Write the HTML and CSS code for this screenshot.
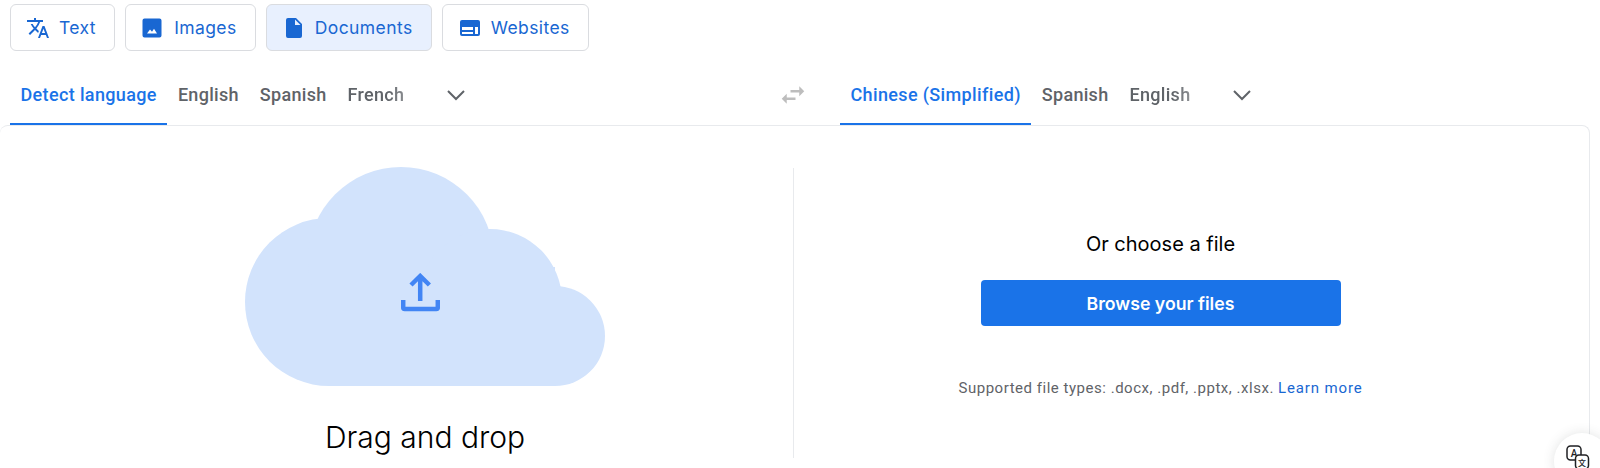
FILE: index.html
```html
<!DOCTYPE html>
<html lang="en">

<head>
  <meta charset="UTF-8">
  <meta name="viewport" content="width=device-width, initial-scale=1.0">
  <title>Translate</title>
  <link rel="stylesheet" href="styles.css">
</head>

<body>
  <nav class="modes">
    <a class="mode">
      <svg class="mode-icon" viewBox="0 0 24 24"><path d="M12.870 15.070l-2.540-2.510.030-.030A17.520 17.520 0 0 0 14.070 6H17V4h-7V2H8v2H1v1.990h11.170C11.500 7.920 10.440 9.750 9 11.350 8.070 10.320 7.300 9.190 6.690 8h-2c.730 1.630 1.730 3.170 2.980 4.560l-5.090 5.020L4 19l5-5 3.110 3.110.760-2.040zM18.500 10h-2L12 22h2l1.120-3h4.750L21 22h2l-4.500-12zm-2.620 7l1.620-4.330L19.120 17h-3.240z"/></svg>
      Text
    </a>
    <a class="mode">
      <svg class="mode-icon" viewBox="0 0 24 24"><path fill-rule="evenodd" d="M3.500 2.500h15a2 2 0 0 1 2 2v15a2 2 0 0 1-2 2h-15a2 2 0 0 1-2-2v-15a2 2 0 0 1 2-2zM6 17.500l3-4 2 2.200 2-3 3 4.800H6z"/></svg>
      Images
    </a>
    <a class="mode active">
      <svg class="mode-icon" viewBox="0 0 24 24"><path d="M6 2a2 2 0 0 0-2 2v16a2 2 0 0 0 2 2h12a2 2 0 0 0 2-2V8l-6-6H6zm7 7V3.500L18.500 9H13z"/></svg>
      Documents
    </a>
    <a class="mode">
      <svg class="mode-icon" viewBox="0 0 24 24"><path d="M20 4H4a2 2 0 0 0-2 2v12a2 2 0 0 0 2 2h16a2 2 0 0 0 2-2V6a2 2 0 0 0-2-2zM4 11h11v3H4v-3zm0 7v-2h11v2H4zm16 0h-3v-7h3v7z"/></svg>
      Websites
    </a>
  </nav>

  <div class="lang-bar">
    <div class="lang-side source">
      <a class="lang selected">Detect language</a>
      <a class="lang">English</a>
      <a class="lang">Spanish</a>
      <a class="lang fade">French</a>
      <svg class="chevron" viewBox="0 0 24 24"><path d="M4 8l8 8 8-8"/></svg>
    </div>
    <svg class="swap" viewBox="0 0 24 24"><path d="M6.990 11L3 15l3.990 4v-3H14v-2H6.990v-3zM21 9l-3.990-4v3H10v2h7.010v3L21 9z"/></svg>
    <div class="lang-side">
      <a class="lang selected">Chinese (Simplified)</a>
      <a class="lang">Spanish</a>
      <a class="lang fade">English</a>
      <svg class="chevron" viewBox="0 0 24 24"><path d="M4 8l8 8 8-8"/></svg>
    </div>
  </div>

  <main class="panel">
    <section class="drop">
      <svg class="cloud" viewBox="0 0 360 219">
        <circle cx="84" cy="135" r="84"/>
        <circle cx="156" cy="93" r="93"/>
        <circle cx="245" cy="134" r="72"/>
        <circle cx="310" cy="169" r="50"/>
        <rect x="84" y="100" width="226" height="119"/>
      </svg>
      <svg class="upload" viewBox="0 0 39 39"><path d="M10 12l9.200-9 9.200 9M19.200 3v25M2.200 27v7.500a1.500 1.500 0 0 0 1.500 1.500h31.600a1.500 1.500 0 0 0 1.500-1.500V27"/></svg>
      <h2 class="drop-title">Drag and drop</h2>
    </section>
    <section class="choose">
      <h2 class="choose-title">Or choose a file</h2>
      <button class="browse">Browse your files</button>
      <p class="types">Supported file types: .docx, .pdf, .pptx, .xlsx. <a class="learn">Learn more</a></p>
    </section>
  </main>

  <div class="float-btn">
    <svg viewBox="0 0 24 24">
      <rect x="1" y="1" width="14" height="14" rx="3.500"/>
      <text x="8" y="12" text-anchor="middle">A</text>
      <rect x="9.500" y="10" width="13" height="14" rx="3.500"/>
      <text x="16" y="21" text-anchor="middle" class="small">文</text>
    </svg>
  </div>
</body>

</html>
```

FILE: styles.css
```css
* {
  margin: 0;
  padding: 0;
  box-sizing: border-box;
}

html {
  overflow: hidden;
}

body {
  font-family: "Roboto", sans-serif;
  background: #fff;
  overflow: hidden;
  height: 468px;
  position: relative;
}

/* top mode buttons */
.modes {
  display: flex;
  gap: 10.200px;
  padding: 4px 0 0 10px;
}

.mode {
  display: flex;
  align-items: center;
  gap: 9px;
  height: 47px;
  padding: 0 18px 0 15px;
  border: 1px solid #dadce0;
  border-radius: 6px;
  color: #1967d2;
  font-family: "Inter", sans-serif;
  font-size: 17.500px;
  letter-spacing: 0.4px;
}

.mode.active {
  background: #e8f0fe;
}

.mode-icon {
  width: 24px;
  height: 24px;
  fill: #1967d2;
}

/* language tabs */
.lang-bar {
  display: flex;
  align-items: center;
  height: 74px;
  padding-left: 10px;
}

.lang-side {
  display: flex;
  align-items: center;
  height: 100%;
}

.lang-side.source {
  width: 768px;
}

.lang {
  display: flex;
  align-items: center;
  height: 100%;
  padding: 15px 10.500px 0;
  color: #5f6368;
  font-size: 18px;
  font-weight: 500;
  letter-spacing: 0.3px;
  border-bottom: 2px solid transparent;
}

.lang.selected {
  color: #1a73e8;
  letter-spacing: 0.36px;
  border-bottom-color: #1a73e8;
}

.lang.fade {
  -webkit-mask-image: linear-gradient(to right, #000 65%, rgba(0, 0, 0, 0.7) 88%);
  mask-image: linear-gradient(to right, #000 65%, rgba(0, 0, 0, 0.7) 88%);
}

.chevron {
  width: 24px;
  height: 24px;
  margin: 13px 0 0 29px;
  fill: none;
  stroke: #5f6368;
  stroke-width: 2;
}

.swap {
  width: 30px;
  height: 30px;
  margin: 13px 32px 0 0;
  fill: #bdbdbd;
}

/* main panel */
.panel {
  display: flex;
  height: 343px;
  margin-right: 10px;
  border: 1px solid #e8eaed;
  border-left: 0;
  border-bottom: 0;
  border-radius: 8px 8px 0 0;
}

.drop {
  position: relative;
  width: 793px;
  padding: 41px 0 0 57px;
  display: flex;
  flex-direction: column;
  align-items: center;
}

.cloud {
  width: 360px;
  height: 219px;
  fill: #d2e3fc;
}

.upload {
  position: absolute;
  left: 401px;
  top: 147px;
  width: 39px;
  height: 39px;
  fill: none;
  stroke: #4285f4;
  stroke-width: 4.500;
}

.drop-title {
  margin-top: 33px;
  font-family: "Inter", sans-serif;
  font-weight: 300;
  font-size: 30px;
  color: #000;
}

.choose {
  flex: 1;
  margin-top: 42px;
  height: 290px;
  border-left: 1px solid #e8eaed;
  display: flex;
  flex-direction: column;
  align-items: center;
  padding: 64px 62px 0 0;
}

.choose-title {
  font-family: "Inter", sans-serif;
  font-weight: 400;
  font-size: 20px;
  color: #000;
}

.browse {
  width: 360px;
  height: 46px;
  margin-top: 24px;
  background: #1a73e8;
  border: 0;
  border-radius: 4px;
  color: #fff;
  font-family: "Inter", sans-serif;
  font-weight: 600;
  font-size: 17.700px;
}

.types {
  margin-top: 53px;
  color: #5f6368;
  font-size: 15px;
  letter-spacing: 0.52px;
}

.learn {
  color: #1967d2;
  letter-spacing: 0.85px;
}

/* floating button, cut off by the window */
.float-btn {
  position: absolute;
  left: 1554px;
  top: 433px;
  width: 56px;
  height: 56px;
  padding: 12px 0 0 12px;
  border-radius: 50%;
  background: #fff;
  box-shadow: 0 0 12px rgba(60, 64, 67, 0.15);
}

.float-btn svg {
  display: block;
  width: 24px;
  height: 24px;
  overflow: visible;
}

.float-btn rect {
  fill: #fff;
  stroke: #202124;
  stroke-width: 1.500;
}

.float-btn text {
  font-family: "Roboto", sans-serif;
  font-size: 10px;
  font-weight: 500;
  fill: #202124;
}

.float-btn text.small {
  font-family: "Noto Sans CJK SC", sans-serif;
  font-size: 8px;
}
```
